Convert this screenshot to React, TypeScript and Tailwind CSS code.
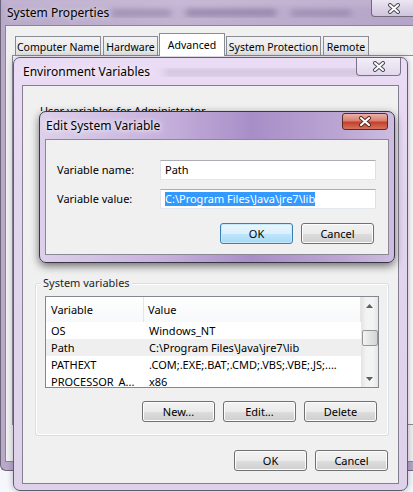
import React from 'react';

const XGlyph = ({ light = false }: { light?: boolean }) => (
  <svg width="14" height="11" viewBox="0 0 14 11">
    <path d="M3 2 L11 9 M11 2 L3 9" stroke={light ? '#5a2a22' : '#4d4a55'} strokeWidth="4" strokeLinecap="round" fill="none" />
    <path d="M3 2 L11 9 M11 2 L3 9" stroke="#ffffff" strokeWidth="2" strokeLinecap="round" fill="none" />
  </svg>
);

const Btn = ({ label, def = false, w = 'w-[73px]' }: { label: string; def?: boolean; w?: string }) => (
  <div
    className={`h-[21px] ${w} rounded-[3px] border flex items-center justify-center ${
      def
        ? 'border-[#3c7fb1] bg-[linear-gradient(#eaf6fd_0%,#d9f0fc_50%,#bee6fd_51%,#a7d9f5_100%)] shadow-[inset_0_0_0_1px_#c6e9fb]'
        : 'border-[#707070] bg-[linear-gradient(#f2f2f2_0%,#ebebeb_50%,#dddddd_51%,#cfcfcf_100%)] shadow-[inset_0_0_0_1px_#fcfcfc]'
    }`}
  >
    {label}
  </div>
);

const Tab = ({ label, w, active = false }: { label: string; w: string; active?: boolean }) => (
  <div
    className={`${w} border border-b-0 border-[#898c95] flex items-center justify-center whitespace-nowrap overflow-hidden text-[10.5px] ${
      active ? 'h-[23px] bg-white -mx-[1px] relative z-10' : 'h-[20px] bg-[linear-gradient(#f3f3f3,#e3e3e3)]'
    }`}
  >
    {label}
  </div>
);

const rows = [
  { name: 'OS', value: 'Windows_NT' },
  { name: 'Path', value: 'C:\\Program Files\\Java\\jre7\\lib', sel: true },
  { name: 'PATHEXT', value: '.COM;.EXE;.BAT;.CMD;.VBS;.VBE;.JS;....' },
  { name: 'PROCESSOR_A...', value: 'x86' },
];

export default function App() {
  return (
    <div className="relative w-[413px] h-[492px] overflow-hidden bg-[linear-gradient(#e4e9f2,#f5f7fb)] font-['Noto_Sans',sans-serif] text-[11px] leading-[14px] text-black">
      {/* System Properties window */}
      <div className="absolute left-0 top-0 w-[440px] h-[471px] rounded-bl-[6px] border-l border-b border-[#6b6478] bg-[linear-gradient(90deg,#b8a9c9,#c2b3d1_40%,#b3a2c6)] flex flex-col">
        <div className="relative h-[25px] flex items-center pl-[6px] shrink-0">
          <svg className="absolute left-0 top-0" width="440" height="25">
            <defs>
              <filter id="bl1"><feGaussianBlur stdDeviation="3" /></filter>
            </defs>
            <g filter="url(#bl1)" opacity="0.55">
              <rect x="110" y="10" width="60" height="6" fill="#7a6a92" />
              <rect x="185" y="9" width="90" height="7" fill="#6e5f88" />
              <rect x="290" y="10" width="60" height="6" fill="#7d6d95" />
              <rect x="0" y="0" width="440" height="4" fill="#d8cde4" />
            </g>
          </svg>
          <span className="relative text-[12px] [text-shadow:0_0_6px_#ffffff]">System Properties</span>
          <div className="absolute left-[370px] top-0 w-[45px] h-[17px] rounded-b-[4px] border border-t-0 border-[#6f6a7c] bg-[linear-gradient(#ece6f2,#cfc4dc)] flex items-center justify-center">
            <XGlyph />
          </div>
        </div>
        <div className="ml-[4px] mb-[8px] flex-1 bg-[#f0f0f0] border border-[#8a8496] flex flex-col">
          <div className="flex items-end pl-[9px] mt-[7px] gap-[2px]">
            <Tab label="Computer Name" w="w-[86px]" />
            <Tab label="Hardware" w="w-[55px]" />
            <Tab label="Advanced" w="w-[66px]" active />
            <Tab label="System Protection" w="w-[95px]" />
            <Tab label="Remote" w="w-[46px]" />
          </div>
          <div className="ml-[6px] -mt-[1px] h-[370px] border border-[#898c95] bg-[#f9f9f9]" />
        </div>
      </div>

      {/* Environment Variables window */}
      <div className="absolute left-[13px] top-[57px] w-[395px] h-[434px] rounded-[7px] border border-[#625c70] bg-[linear-gradient(#eadcf4,#e2d6ee_30%,#ddd2ea)] flex flex-col shadow-[0_0_6px_rgba(60,40,90,0.35)]">
        <div className="relative h-[27px] shrink-0 flex items-center pl-[9px]">
          <svg className="absolute left-0 top-0" width="395" height="27">
            <defs>
              <filter id="bl2"><feGaussianBlur stdDeviation="3.5" /></filter>
            </defs>
            <g filter="url(#bl2)" opacity="0.22">
              <rect x="150" y="11" width="210" height="7" fill="#6a6078" />
            </g>
          </svg>
          <span className="relative text-[12px] [text-shadow:0_0_6px_#ffffff]">Environment Variables</span>
          <div className="absolute left-[342px] top-0 w-[45px] h-[18px] rounded-b-[4px] border border-t-0 border-[#7a7388] bg-[linear-gradient(#f3eef7,#e2d8ec)] flex items-center justify-center">
            <XGlyph />
          </div>
        </div>
        <div className="mx-[8px] mb-[6px] flex-1 bg-[#f0f0f0] border border-[#847e90] flex flex-col">
          <div className="h-[172px] shrink-0 pl-[17px] pt-[20px]">
            <div className="h-[5px] overflow-hidden">
              <div className="-mt-[2px]">User variables for Administrator</div>
            </div>
          </div>

          <div className="mt-[25px] ml-[12px] mr-[9px] border border-[#d5dfe5] rounded-[3px] shadow-[inset_0_0_0_1px_#ffffff] flex flex-col">
            <div className="-mt-[8px] ml-[5px] px-[2px] bg-[#f0f0f0] w-fit text-[#1e1e1e]">System variables</div>
            <div className="ml-[9px] mt-[6px] w-[334px] h-[92px] border border-[#828790] bg-white flex overflow-hidden">
              <div className="flex-1 flex flex-col">
                <div className="h-[25px] shrink-0 flex bg-[linear-gradient(#ffffff,#f7f8fa)]">
                  <div className="w-[98px] pl-[5px] flex items-center border-r border-[#e5e5e5]">Variable</div>
                  <div className="flex-1 pl-[4px] flex items-center border-r border-[#e5e5e5]">Value</div>
                </div>
                {rows.map((r) => (
                  <div key={r.name} className={`h-[17px] shrink-0 flex items-center ${r.sel ? 'bg-[#efefef]' : ''}`}>
                    <div className="w-[99px] pl-[5px] whitespace-nowrap overflow-hidden">{r.name}</div>
                    <div className="flex-1 pl-[4px] whitespace-nowrap overflow-hidden">{r.value}</div>
                  </div>
                ))}
              </div>
              <div className="w-[17px] shrink-0 bg-[linear-gradient(90deg,#e3e3e3,#f3f3f3_30%,#f3f3f3_70%,#e6e6e6)] flex flex-col items-center">
                <div className="h-[17px] flex items-center justify-center">
                  <svg width="7" height="4" viewBox="0 0 7 4"><path d="M0 4 L3.5 0 L7 4 Z" fill="#5e5e5e" /></svg>
                </div>
                <div className="mt-[16px] w-[16px] h-[16px] rounded-[2px] border border-[#959595] bg-[linear-gradient(90deg,#f4f4f4,#e3e3e3_50%,#d4d4d4)]" />
                <div className="flex-1" />
                <div className="h-[17px] flex items-center justify-center">
                  <svg width="7" height="4" viewBox="0 0 7 4"><path d="M0 0 L3.5 4 L7 0 Z" fill="#5e5e5e" /></svg>
                </div>
              </div>
            </div>
            <div className="mt-[13px] mb-[13px] pr-[11px] flex justify-end gap-[8px]">
              <Btn label="New..." />
              <Btn label="Edit..." />
              <Btn label="Delete" />
            </div>
          </div>

          <div className="mt-[14px] pr-[10px] flex justify-end gap-[8px]">
            <Btn label="OK" />
            <Btn label="Cancel" />
          </div>
        </div>
      </div>

      {/* Edit System Variable dialog */}
      <div className="absolute left-[39px] top-[111px] w-[356px] h-[152px] rounded-[7px] border border-[#3b3446] bg-[linear-gradient(90deg,#ddd0ea,#c6b1dc_35%,#a88ec7_60%,#bba6d3_85%,#cdbde0)] flex flex-col shadow-[0_3px_8px_rgba(0,0,0,0.55)]">
        <div className="relative h-[27px] shrink-0 flex items-center pl-[6px]">
          <span className="text-[12px] [text-shadow:0_0_8px_#ffffff,0_0_4px_#ffffff]">Edit System Variable</span>
          <div className="absolute left-[302px] top-[1px] w-[46px] h-[17px] rounded-[3px] border border-[#5b2a25] bg-[linear-gradient(#eab1a6_0%,#d8806f_45%,#c4402d_55%,#d5735c_100%)] flex items-center justify-center">
            <XGlyph light />
          </div>
        </div>
        <div className="mx-[5px] mb-[7px] flex-1 bg-[#f0f0f0] border border-[#8b8796] flex flex-col">
          <div className="mt-[20px] flex items-center">
            <div className="w-[114px] pl-[11px]">Variable name:</div>
            <div className="w-[216px] h-[20px] border border-[#abadb3] border-l-[#e2e3ea] border-r-[#dbdfe6] border-b-[#e3e9ef] bg-white pl-[4px] flex items-center">Path</div>
          </div>
          <div className="mt-[9px] flex items-center">
            <div className="w-[114px] pl-[11px]">Variable value:</div>
            <div className="w-[216px] h-[20px] border border-[#abadb3] border-l-[#e2e3ea] border-r-[#dbdfe6] border-b-[#e3e9ef] bg-white pl-[4px] flex items-center">
              <span className="bg-[#3399ff] text-white">C:\Program Files\Java\jre7\lib</span>
            </div>
          </div>
          <div className="mt-[14px] pr-[14px] flex justify-end gap-[8px]">
            <Btn label="OK" def w="w-[73px]" />
            <Btn label="Cancel" w="w-[73px]" />
          </div>
        </div>
      </div>
    </div>
  );
}
